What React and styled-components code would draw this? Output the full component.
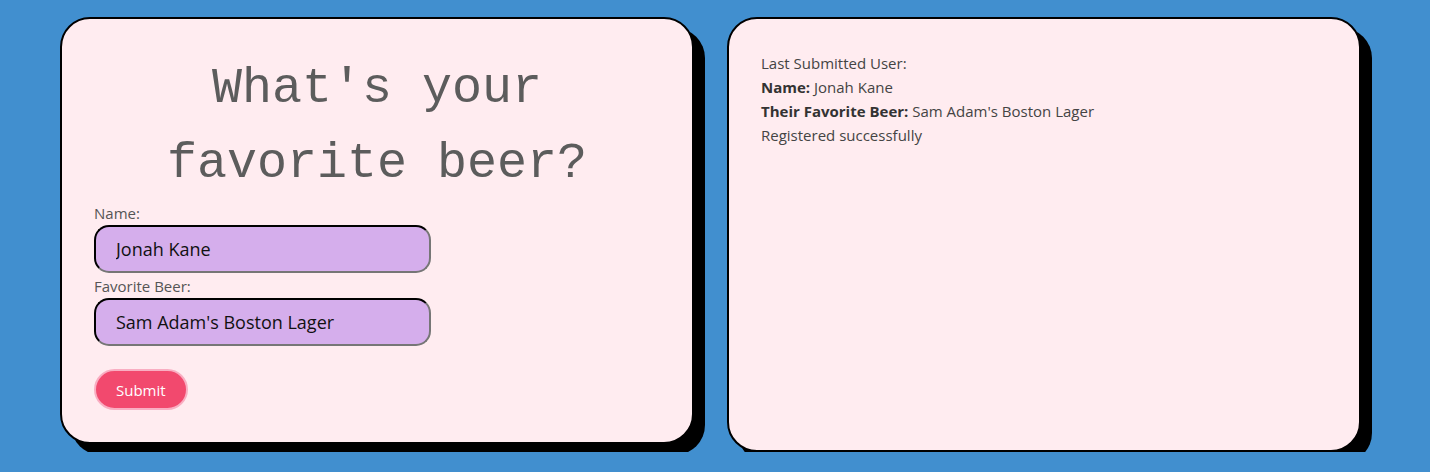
import React from 'react';
import styled, { createGlobalStyle } from 'styled-components';

const GlobalStyle = createGlobalStyle`
  body {
    margin: 0;
    background-color: #418fcf;
    font-family: 'Open Sans', 'Noto Sans', sans-serif;
  }
`;

const App = () => {
  return (
    <>
      <GlobalStyle />
      <StyledPage>
        <StyledCard $height={427}>
          <StyledTitle>What's your favorite beer?</StyledTitle>
          <StyledForm onSubmit={(e) => e.preventDefault()}>
            <StyledLabel htmlFor="name">Name:</StyledLabel>
            <StyledInput id="name" defaultValue="Jonah Kane" />
            <StyledLabel htmlFor="beer">Favorite Beer:</StyledLabel>
            <StyledInput id="beer" defaultValue="Sam Adam's Boston Lager" />
            <StyledButton type="submit">Submit</StyledButton>
          </StyledForm>
        </StyledCard>

        <StyledCard $height={435}>
          <StyledResult>
            <p>Last Submitted User:</p>
            <p>
              <strong>Name:</strong> Jonah Kane
            </p>
            <p>
              <strong>Their Favorite Beer:</strong> Sam Adam's Boston Lager
            </p>
            <p>Registered successfully</p>
          </StyledResult>
        </StyledCard>
      </StyledPage>
    </>
  );
};

export default App;

const StyledPage = styled.div`
  display: flex;
  align-items: flex-start;
  gap: 33px;
  padding: 17px 69px 0 60px;
`;

const StyledCard = styled.div`
  box-sizing: border-box;
  width: 634px;
  height: ${(p) => p.$height}px;
  padding: 32px;
  background-color: #ffecf0;
  border: 2px solid #000;
  border-radius: 30px;
  box-shadow: 11px 11px 0 #000;
`;

const StyledTitle = styled.h1`
  margin: 0;
  font-family: 'Liberation Mono', 'Courier New', monospace;
  font-size: 50px;
  font-weight: normal;
  line-height: 75px;
  color: #5c5c5c;
  text-align: center;
`;

const StyledForm = styled.form`
  padding-top: 2px;
`;

const StyledLabel = styled.label`
  display: block;
  font-size: 15px;
  line-height: 20px;
  color: #555;
`;

const StyledInput = styled.input`
  display: block;
  box-sizing: border-box;
  width: 337px;
  height: 48px;
  margin: 2px 0 3px;
  padding: 0 20px;
  font-family: inherit;
  font-size: 18px;
  color: #111;
  background-color: #d5aeec;
  border: 2px inset #767676;
  border-top-color: #222;
  border-left-color: #222;
  border-radius: 15px;
  outline: none;
`;

const StyledButton = styled.button`
  display: block;
  box-sizing: border-box;
  height: 41px;
  margin-top: 23px;
  padding: 0 20px;
  font-family: inherit;
  font-size: 15px;
  color: #fff;
  background-color: #f2496e;
  border: 2px solid #f9aec2;
  border-radius: 21px;
  cursor: pointer;
`;

const StyledResult = styled.div`
  font-size: 15px;
  line-height: 24px;
  color: #444;
  p {
    margin: 0;
  }
  strong {
    color: #333;
  }
`;
